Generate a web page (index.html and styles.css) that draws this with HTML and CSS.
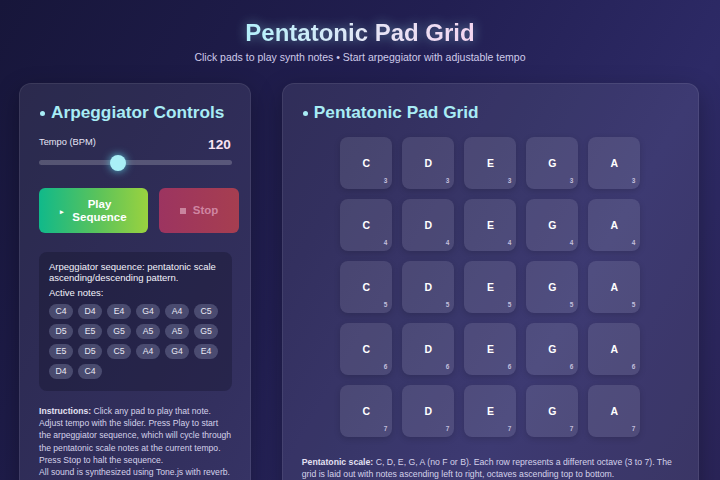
FILE: index.html
```html
<!DOCTYPE html>
<html lang="en">
<head>
<meta charset="utf-8">
<title>Pentatonic Pad Grid</title>
<link rel="stylesheet" href="styles.css">
</head>
<body>
<header class="header">
  <h1 class="title">Pentatonic Pad Grid</h1>
  <p class="subtitle">Click pads to play synth notes • Start arpeggiator with adjustable tempo</p>
</header>
<main class="layout">
  <section class="panel controls">
    <h2 class="panel-title"><span class="dot"></span>Arpeggiator Controls</h2>
    <div class="tempo-row">
      <span class="tempo-label">Tempo (BPM)</span>
      <span class="tempo-value">120</span>
    </div>
    <input class="slider" type="range" min="40" max="240" value="120">
    <div class="buttons">
      <button class="btn btn-play"><span class="btn-icon">▸</span><span>Play<br>Sequence</span></button>
      <button class="btn btn-stop" disabled><span class="stop-icon"></span><span>Stop</span></button>
    </div>
    <div class="info">
      <p class="info-text">Arpeggiator sequence: pentatonic scale ascending/descending pattern.</p>
      <p class="info-label">Active notes:</p>
      <div class="chips">
        <span class="chip">C4</span><span class="chip">D4</span><span class="chip">E4</span><span class="chip">G4</span><span class="chip">A4</span><span class="chip">C5</span>
        <span class="chip">D5</span><span class="chip">E5</span><span class="chip">G5</span><span class="chip">A5</span><span class="chip">A5</span><span class="chip">G5</span>
        <span class="chip">E5</span><span class="chip">D5</span><span class="chip">C5</span><span class="chip">A4</span><span class="chip">G4</span><span class="chip">E4</span>
        <span class="chip">D4</span><span class="chip">C4</span>
      </div>
    </div>
    <p class="instructions"><strong>Instructions:</strong> Click any pad to play that note.<br>Adjust tempo with the slider. Press Play to start<br>the arpeggiator sequence, which will cycle through<br>the pentatonic scale notes at the current tempo.<br>Press Stop to halt the sequence.<br>All sound is synthesized using Tone.js with reverb.</p>
  </section>
  <section class="panel grid-panel">
    <h2 class="panel-title"><span class="dot"></span>Pentatonic Pad Grid</h2>
    <div class="pads">
      <div class="pad">C<span class="oct">3</span></div><div class="pad">D<span class="oct">3</span></div><div class="pad">E<span class="oct">3</span></div><div class="pad">G<span class="oct">3</span></div><div class="pad">A<span class="oct">3</span></div>
      <div class="pad">C<span class="oct">4</span></div><div class="pad">D<span class="oct">4</span></div><div class="pad">E<span class="oct">4</span></div><div class="pad">G<span class="oct">4</span></div><div class="pad">A<span class="oct">4</span></div>
      <div class="pad">C<span class="oct">5</span></div><div class="pad">D<span class="oct">5</span></div><div class="pad">E<span class="oct">5</span></div><div class="pad">G<span class="oct">5</span></div><div class="pad">A<span class="oct">5</span></div>
      <div class="pad">C<span class="oct">6</span></div><div class="pad">D<span class="oct">6</span></div><div class="pad">E<span class="oct">6</span></div><div class="pad">G<span class="oct">6</span></div><div class="pad">A<span class="oct">6</span></div>
      <div class="pad">C<span class="oct">7</span></div><div class="pad">D<span class="oct">7</span></div><div class="pad">E<span class="oct">7</span></div><div class="pad">G<span class="oct">7</span></div><div class="pad">A<span class="oct">7</span></div>
    </div>
    <p class="scale-note"><strong>Pentatonic scale:</strong> C, D, E, G, A (no F or B). Each row represents a different octave (3 to 7). The grid is laid out with notes ascending left to right, octaves ascending top to bottom.</p>
  </section>
</main>
</body>
</html>
```
FILE: styles.css
```css
* { box-sizing: border-box; }
html, body { height: 100%; }
body {
  margin: 0;
  font-family: "Liberation Sans", Arial, sans-serif;
  color: #ffffff;
  background: linear-gradient(120deg, #17163a 0%, #221f52 45%, #2d2a66 75%, #2a2458 100%);
  overflow: hidden;
}
.header {
  text-align: center;
  padding-top: 18px;
}
.title {
  margin: 0;
  font-size: 24px;
  font-weight: 700;
  line-height: 29px;
  display: inline-block;
  background: linear-gradient(90deg, #b4f1fb 0%, #e6e6f6 55%, #f4d6f0 100%);
  -webkit-background-clip: text;
  background-clip: text;
  color: transparent;
  filter: drop-shadow(0 0 6px rgba(165, 243, 252, 0.45));
}
.subtitle {
  margin: 4px 0 0;
  font-size: 10.5px;
  line-height: 13px;
  color: #cfcbea;
}
.layout {
  display: grid;
  grid-template-columns: minmax(0, 1fr) minmax(0, 1.8fr);
  gap: 31px;
  padding: 19px 21px 0 19px;
}
.panel {
  background: rgba(255, 255, 255, 0.08);
  border: 1px solid rgba(255, 255, 255, 0.08);
  border-radius: 12px;
  padding: 17px 19px 20px;
  box-shadow: 0 8px 24px rgba(0, 0, 0, 0.3);
  min-height: 420px;
}
.panel-title {
  margin: 0;
  font-size: 17.25px;
  line-height: 22px;
  font-weight: 700;
  color: #a8ecf5;
  display: flex;
  align-items: center;
}
.dot {
  width: 5px;
  height: 5px;
  border-radius: 50%;
  background: #a8ecf5;
  margin: 2px 6px 0 1px;
}
.tempo-row {
  margin-top: 13px;
  display: flex;
  justify-content: space-between;
  align-items: flex-start;
}
.tempo-label {
  font-size: 9.3px;
  line-height: 12px;
  color: #e7e5f5;
}
.tempo-value {
  font-size: 13.6px;
  line-height: 16px;
  font-weight: 700;
  color: #f9e3f3;
  margin-top: 1px;
}
.slider {
  -webkit-appearance: none;
  appearance: none;
  display: block;
  width: 193px;
  height: 5px;
  margin: 7px 0 0;
  border-radius: 3px;
  background: rgba(255, 255, 255, 0.2);
  outline: none;
}
.slider::-webkit-slider-thumb {
  -webkit-appearance: none;
  appearance: none;
  width: 16px;
  height: 16px;
  border-radius: 50%;
  background: #a9eff6;
  box-shadow: 0 0 8px rgba(103, 232, 249, 0.8);
  border: none;
}
.buttons {
  display: flex;
  gap: 11px;
  margin-top: 23px;
}
.btn {
  flex: none;
  height: 45px;
  border: none;
  border-radius: 6px;
  font-family: inherit;
  font-size: 11.5px;
  font-weight: 700;
  line-height: 13px;
  display: flex;
  align-items: center;
  justify-content: center;
  gap: 8px;
  padding: 0;
}
.btn-play {
  width: 109px;
  color: #ffffff;
  background: linear-gradient(90deg, #10b98a 0%, #5cc35a 55%, #9ad23f 100%);
}
.btn-icon { font-size: 7px; margin-top: 1px; }
.btn-stop {
  width: 80px;
  color: #cf86a2;
  background: linear-gradient(90deg, #9c3460 0%, #a63e50 100%);
  gap: 7px;
}
.stop-icon {
  width: 6px;
  height: 6px;
  background: #c9849e;
}
.info {
  margin-top: 19px;
  background: rgba(10, 10, 30, 0.28);
  border-radius: 8px;
  padding: 9px 9px 12px 10px;
  width: 193px;
}
.info-text {
  margin: 0;
  font-size: 9.5px;
  line-height: 11px;
  color: #f3f2fb;
}
.info-label {
  margin: 4px 0 0;
  font-size: 9.5px;
  line-height: 12px;
  color: #f3f2fb;
}
.chips {
  display: flex;
  flex-wrap: wrap;
  gap: 5px 5px;
  margin-top: 5px;
}
.chip {
  width: 24px;
  height: 15px;
  border-radius: 8px;
  background: rgba(120, 125, 160, 0.45);
  font-size: 8.7px;
  line-height: 15px;
  text-align: center;
  color: #e9e9f4;
}
.instructions {
  margin: 14px -6px 0 0;
  font-size: 8.6px;
  line-height: 12.2px;
  color: #d5d2ea;
}
.instructions strong { color: #e3e1f3; }
.grid-panel {
  display: flex;
  flex-direction: column;
}
.pads {
  margin: 14px auto 0;
  display: grid;
  grid-template-columns: repeat(5, 52px);
  grid-auto-rows: 52px;
  gap: 10px;
}
.pad {
  position: relative;
  border-radius: 8px;
  background: rgba(255, 255, 255, 0.1);
  box-shadow: 0 2px 6px rgba(0, 0, 0, 0.15);
  display: flex;
  align-items: center;
  justify-content: center;
  font-size: 10.5px;
  font-weight: 700;
  color: #ffffff;
}
.oct {
  position: absolute;
  right: 5px;
  bottom: 4px;
  font-size: 6.5px;
  line-height: 8px;
  font-weight: 700;
  color: #c2bfdc;
}
.scale-note {
  margin: 19px 0 0;
  font-size: 8.7px;
  line-height: 12px;
  color: #d5d2ea;
}
.scale-note strong { color: #e3e1f3; }
```
